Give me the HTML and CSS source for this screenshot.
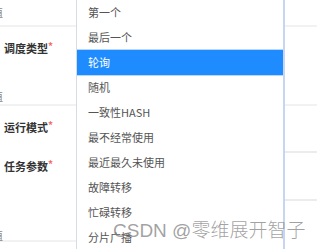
FILE: index.html
```html
<!DOCTYPE html>
<html lang="en">
<head>
    <meta charset="UTF-8">
    <meta name="viewport" content="width=device-width, initial-scale=1.0">
    <title>调度类型下拉</title>
    <link rel="stylesheet" href="styles.css">
</head>
<body>
    <div class="page">
        <div class="form-col">
            <div class="block block-top">
                <span class="cut">值</span>
            </div>
            <div class="block block-mid">
                <div class="label">调度类型<i>*</i></div>
                <span class="cut cut-low">值</span>
            </div>
            <div class="block block-low">
                <div class="label">运行模式<i>*</i></div>
                <div class="label label-gap">任务参数<i>*</i></div>
                <span class="cut cut-end">值</span>
            </div>
        </div>

        <ul class="dropdown">
            <li>第一个</li>
            <li>最后一个</li>
            <li class="active">轮询</li>
            <li>随机</li>
            <li>一致性HASH</li>
            <li>最不经常使用</li>
            <li>最近最久未使用</li>
            <li>故障转移</li>
            <li>忙碌转移</li>
            <li>分片广播</li>
        </ul>

        <div class="side-col">
            <div class="side s1"></div>
            <div class="side s2"></div>
            <div class="side s3"></div>
            <div class="side s4"></div>
        </div>

        <div class="watermark">CSDN @零维展开智子</div>
    </div>
</body>
</html>
```

FILE: styles.css
```css
body {
    margin: 0;
    background-color: #fff;
    font-family: "Noto Sans CJK SC", "Noto Sans", sans-serif;
}

.page {
    position: relative;
    width: 317px;
    height: 249px;
    overflow: hidden;
    display: grid;
    grid-template-columns: 76px 209px 32px;
}

/* left form column */
.form-col {
    display: flex;
    flex-direction: column;
}

.block {
    border-bottom: 2px solid #f2f2f2;
    display: flex;
    flex-direction: column;
}

.block-top {
    height: 27px;
    box-sizing: border-box;
    padding-top: 2px;
}

.block-mid {
    height: 79px;
    box-sizing: border-box;
    padding-top: 11px;
}

.block-low {
    height: 136px;
    box-sizing: border-box;
    padding-top: 11px;
}

.label {
    font-size: 11px;
    line-height: 16px;
    font-weight: bold;
    color: #333;
    padding-left: 4px;
}

.label i {
    font-style: normal;
    color: #f56c6c;
    font-size: 10px;
    vertical-align: 3px;
}

.label-gap {
    margin-top: 21px;
}

.cut {
    font-size: 11px;
    line-height: 20px;
    color: #888;
    margin-left: -8px;
}

.cut-low {
    margin-top: 30px;
}

.cut-end {
    margin-top: 51px;
}

/* dropdown list */
.dropdown {
    list-style: none;
    margin: 0;
    padding: 0;
    border-left: 1px solid #d6dbe6;
    border-right: 2px solid #c6d6f2;
    background-color: #fff;
    z-index: 1;
}

.dropdown li {
    height: 25px;
    line-height: 25px;
    padding-left: 11px;
    font-size: 11px;
    color: #555;
    white-space: nowrap;
}

.dropdown li.active {
    background-color: #1e8cff;
    color: #fff;
    box-shadow: 0 -1px 0 #b7d7ff, 0 1px 0 #b7d7ff;
}

/* right column */
.side {
    border-bottom: 2px solid #f2f2f2;
    box-sizing: border-box;
}

.s1 { height: 27px; }
.s2 { height: 79px; }
.s3 { height: 47px; border-bottom-color: #ececec; }
.s4 { height: 48px; border-bottom-color: #ececec; }

.watermark {
    position: absolute;
    left: 113px;
    top: 220px;
    font-size: 19px;
    line-height: 22px;
    color: rgba(120, 120, 120, 0.7);
    font-family: "Liberation Sans", "Noto Sans CJK SC", sans-serif;
    font-weight: 300;
    white-space: nowrap;
    z-index: 2;
}
```
